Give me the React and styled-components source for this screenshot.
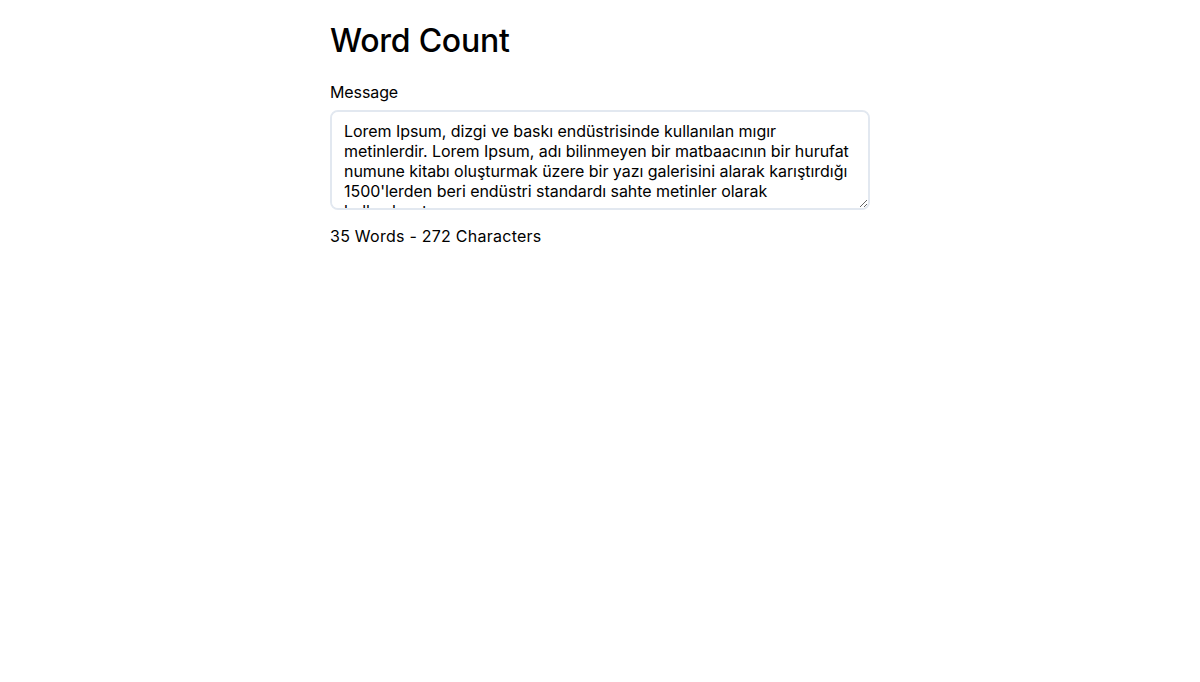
import React, { useState } from "react";
import styled, { createGlobalStyle } from "styled-components";

const GlobalStyle = createGlobalStyle`
  body {
    margin: 0;
    background: #ffffff;
    font-family: Inter, "Noto Sans", sans-serif;
    color: #000000;
  }
`;

const Page = styled.div`
  width: 540px;
  margin: 0 auto;
  padding-top: 22px;
`;

const Title = styled.h1`
  margin: 0 0 22px;
  font-size: 32px;
  font-weight: 500;
  line-height: 1.2;
  letter-spacing: -0.25px;
`;

const Field = styled.div`
  display: flex;
  flex-direction: column;
  gap: 8px;
`;

const Label = styled.label`
  font-size: 16px;
  line-height: 20px;
  letter-spacing: -0.1px;
`;

const TextArea = styled.textarea`
  box-sizing: border-box;
  width: 540px;
  height: 100px;
  padding: 9px 12px 8px;
  border: 2px solid #e2e8f0;
  border-radius: 8px;
  font-family: Inter, "Noto Sans", sans-serif;
  font-size: 16px;
  line-height: 20px;
  letter-spacing: -0.05px;
  color: #000000;
  outline: none;
  resize: vertical;
`;

const Stats = styled.p`
  margin: 16px 0 0;
  font-size: 16px;
  line-height: 20px;
  letter-spacing: 0.25px;
`;

const initialText =
  "Lorem Ipsum, dizgi ve baskı endüstrisinde kullanılan mıgır metinlerdir. Lorem Ipsum, adı bilinmeyen bir matbaacının bir hurufat numune kitabı oluşturmak üzere bir yazı galerisini alarak karıştırdığı 1500'lerden beri endüstri standardı sahte metinler olarak kullanılmıştır.";

// apostrophes split a word too, so "1500'lerden" counts as two
const countWords = text => text.split(/[\s']+/).filter(Boolean).length;

export default function App() {
  const [message, setMessage] = useState(initialText);

  return (
    <Page>
      <GlobalStyle />
      <Title>Word Count</Title>
      <Field>
        <Label htmlFor="message">Message</Label>
        <TextArea
          id="message"
          value={message}
          onChange={e => setMessage(e.target.value)}
        />
      </Field>
      <Stats>
        {countWords(message)} Words - {message.length} Characters
      </Stats>
    </Page>
  );
}
